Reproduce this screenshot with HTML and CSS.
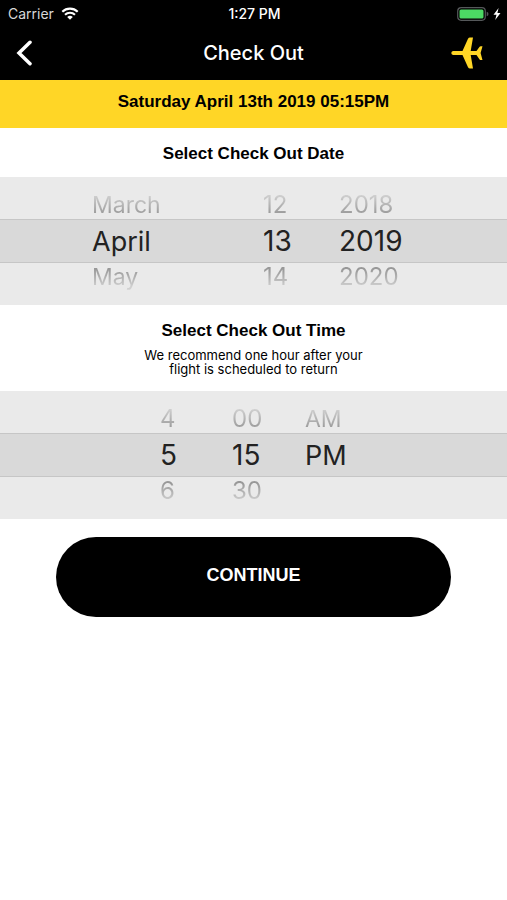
FILE: index.html
```html
<!DOCTYPE html>
<html lang="en">
<head>
<meta charset="utf-8">
<meta name="viewport" content="width=device-width, initial-scale=1">
<title>Check Out</title>
<link rel="stylesheet" href="styles.css">
</head>
<body>
<header class="top">
  <div class="status">
    <div class="status-left">
      <span>Carrier</span>
      <svg class="wifi" viewBox="0 0 18 13" aria-hidden="true">
        <path d="M1.300 4.700A11.200 11.200 0 0 1 16.700 4.700" fill="none" stroke="#fff" stroke-width="2.200"/>
        <path d="M4 7.700A7.200 7.200 0 0 1 14 7.700" fill="none" stroke="#fff" stroke-width="2.100"/>
        <path d="M9 12.800L6.200 10A4 4 0 0 1 11.800 10Z" fill="#fff"/>
      </svg>
    </div>
    <span class="clock">1:27 PM</span>
    <div class="status-right">
      <svg class="battery" viewBox="0 0 32 14" aria-hidden="true">
        <rect x="0.700" y="0.700" width="27.600" height="12.600" rx="3.500" fill="none" stroke="#55585a" stroke-width="1.200"/>
        <rect x="2.500" y="2.500" width="24" height="9" rx="1.500" fill="#4cd964"/>
        <path d="M29.700 4.700Q31.500 5.300 31.500 7T29.700 9.300Z" fill="#55585a"/>
      </svg>
      <svg class="bolt" viewBox="0 0 8 12" aria-hidden="true"><path d="M5.600 0L0.500 6.800H3.500L2.200 12L7.500 5H4.400Z" fill="#fff"/></svg>
    </div>
  </div>
  <nav class="nav">
    <button class="icon-button back" type="button" aria-label="Back">
      <svg class="chevron" viewBox="0 0 16 26" aria-hidden="true"><path d="M14 2.300L3 13L14 23.700" fill="none" stroke="#fff" stroke-width="3.500" stroke-linecap="round" stroke-linejoin="miter"/></svg>
    </button>
    <h1 class="title">Check Out</h1>
    <button class="icon-button flight" type="button" aria-label="Flights">
      <svg class="plane" viewBox="0 0 32 32" aria-hidden="true"><path d="M2 14H11.500L17 1.800Q17.700 0.500 19 0.500H22L19.700 14H25.500L28.600 9.800Q29 9.300 29.600 9.300H31.500L29.600 15.900L31.500 22.900H29.600Q29 22.900 28.600 22.400L25.500 17.900H19.700L22 31.500H19Q17.700 31.500 17 30.200L11.500 17.900H2Q0.300 17.300 0.300 15.900T2 14Z" fill="#ffd626"/></svg>
    </button>
  </nav>
</header>
<main>
  <p class="summary">Saturday April 13th 2019 05:15PM</p>

  <section>
    <h2 class="heading date-heading">Select Check Out Date</h2>
    <div class="picker date-picker">
      <ul class="wheel" role="listbox" aria-label="Month">
        <li class="before" role="option">March</li>
        <li class="selected" role="option" aria-selected="true">April</li>
        <li class="after" role="option">May</li>
      </ul>
      <ul class="wheel numeric" role="listbox" aria-label="Day">
        <li class="before" role="option">12</li>
        <li class="selected" role="option" aria-selected="true">13</li>
        <li class="after" role="option">14</li>
      </ul>
      <ul class="wheel numeric" role="listbox" aria-label="Year">
        <li class="before" role="option">2018</li>
        <li class="selected" role="option" aria-selected="true">2019</li>
        <li class="after" role="option">2020</li>
      </ul>
    </div>
  </section>

  <section>
    <div class="time-intro">
      <h2 class="heading">Select Check Out Time</h2>
      <p class="hint">We recommend one hour after your<br>flight is scheduled to return</p>
    </div>
    <div class="picker time-picker">
      <ul class="wheel numeric" role="listbox" aria-label="Hour">
        <li class="before" role="option">4</li>
        <li class="selected" role="option" aria-selected="true">5</li>
        <li class="after" role="option">6</li>
      </ul>
      <ul class="wheel numeric" role="listbox" aria-label="Minute">
        <li class="before" role="option">00</li>
        <li class="selected" role="option" aria-selected="true">15</li>
        <li class="after" role="option">30</li>
      </ul>
      <ul class="wheel" role="listbox" aria-label="AM or PM">
        <li class="before" role="option">AM</li>
        <li class="selected" role="option" aria-selected="true">PM</li>
      </ul>
    </div>
  </section>

  <button class="continue" type="button">CONTINUE</button>
</main>
</body>
</html>
```
FILE: styles.css
```css
* {
  box-sizing: border-box;
}

body {
  margin: 0;
  background: #fff;
  color: #000;
  font-family: Inter, "Liberation Sans", sans-serif;
}

h1,
h2,
p,
ul {
  margin: 0;
  padding: 0;
}

ul {
  list-style: none;
}

svg {
  display: block;
}

.top {
  background: #000;
  color: #fff;
}

.status {
  display: grid;
  grid-template-columns: 1fr auto 1fr;
  align-items: center;
  height: 26px;
  padding: 1px 6px 0 8px;
  font-size: 14px;
}

.status-left,
.status-right {
  display: flex;
  align-items: center;
}

.status-left {
  gap: 7px;
  color: #d8d8d8;
}

.status-right {
  justify-content: flex-end;
  gap: 4px;
}

.clock {
  font-weight: 500;
}

.wifi {
  width: 18px;
  height: 13px;
}

.battery {
  width: 32px;
  height: 14px;
}

.bolt {
  width: 8px;
  height: 12px;
}

.nav {
  display: grid;
  grid-template-columns: 1fr auto 1fr;
  align-items: center;
  height: 54px;
  padding: 0 24px 0 16px;
}

.icon-button {
  padding: 0;
  border: 0;
  background: none;
}

.back {
  justify-self: start;
}

.flight {
  justify-self: end;
}

.chevron {
  width: 16px;
  height: 26px;
}

.plane {
  width: 32px;
  height: 32px;
}

.title {
  padding-left: 8px;
  font-size: 20px;
  font-weight: 500;
  line-height: 24px;
}

.summary {
  height: 48px;
  padding-top: 12px;
  background: #ffd626;
  font: 700 17px/20px "Liberation Sans", sans-serif;
  text-align: center;
}

.heading {
  font: 700 17px/20px "Liberation Sans", sans-serif;
  text-align: center;
}

.date-heading {
  padding: 16px 0 13px;
}

.time-intro {
  padding: 16px 0 15px;
}

.hint {
  margin-top: 7px;
  font-size: 13px;
  line-height: 14px;
  text-align: center;
}

.picker {
  display: grid;
  background: linear-gradient(#eaeaea 42px, #c6c6c6 42px 43px, #d9d9d9 43px 85px, #c6c6c6 85px 86px, #eaeaea 86px);
}

.date-picker {
  grid-template-columns: 92fr 171fr 76fr 168fr;
}

.time-picker {
  grid-template-columns: 160fr 72fr 73fr 202fr;
}

.wheel:first-child {
  grid-column-start: 2;
}

.before,
.after {
  height: 42px;
  background-clip: text;
  color: transparent;
  font-size: 23px;
  line-height: 28px;
}

.before {
  padding-top: 14px;
  background-image: linear-gradient(#d0d0d0 18px, #989898 38px);
}

.after {
  background-image: linear-gradient(#989898 6px, #d0d0d0 24px);
}

.selected {
  height: 44px;
  color: #222;
  font-size: 27px;
  line-height: 45px;
}

.numeric .before,
.numeric .after {
  font-size: 24px;
}

.numeric .selected {
  font-size: 28px;
}

.continue {
  display: block;
  width: 78%;
  height: 80px;
  margin: 18px auto;
  padding: 0 0 4px;
  border: 0;
  border-radius: 40px;
  background: #000;
  color: #fff;
  font: 700 18px/24px "Liberation Sans", sans-serif;
}
```
